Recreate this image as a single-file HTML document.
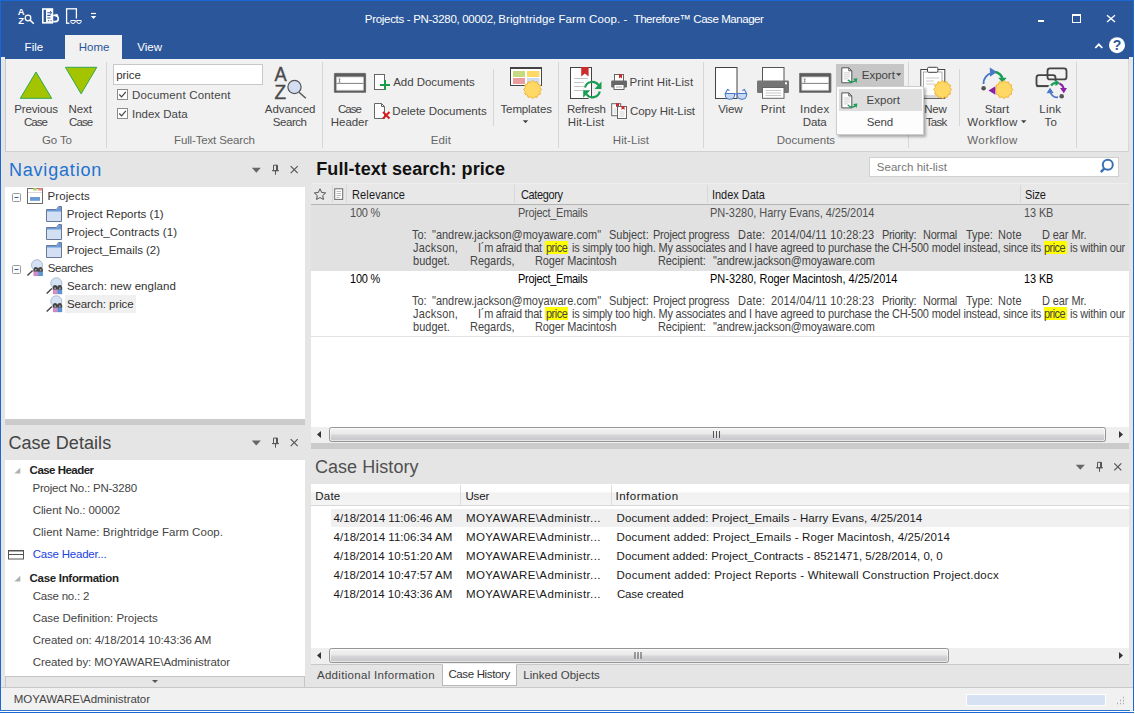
<!DOCTYPE html><html><head><meta charset="utf-8"><title>Therefore Case Manager</title><style>

html,body{margin:0;padding:0;}
body{width:1135px;height:714px;position:relative;overflow:hidden;background:#fff;font-family:"Liberation Sans", sans-serif;}
.r{position:absolute;box-sizing:border-box;}
.t{position:absolute;white-space:pre;line-height:1;}
.i{position:absolute;left:0;top:0;overflow:visible;pointer-events:none;}
.hl{background:#ffff00;}

</style></head><body>
<div class="r" style="left:0px;top:0px;width:1135px;height:714px;background:#e5e5e5;"></div>
<div class="r" style="left:0px;top:0px;width:1135px;height:59px;background:#2b579a;"></div>
<div class="r" style="left:1px;top:57px;width:4px;height:2px;background:#ececec;"></div>
<div class="r" style="left:1129px;top:57px;width:4px;height:2px;background:#e8e8e8;"></div>
<span class="t" style="left:364.82px;top:14.00px;font-size:11.5px;color:#fff;letter-spacing:-0.304px;">Projects - PN-3280, 00002,</span>
<span class="t" style="left:498.21px;top:14.00px;font-size:11.5px;color:#fff;letter-spacing:0.114px;">Brightridge Farm Coop. -</span>
<span class="t" style="left:633.57px;top:14.00px;font-size:11.5px;color:#fff;letter-spacing:-0.439px;">Therefore™ Case Manager</span>
<svg class="i" width="1135" height="714" viewBox="0 0 1135 714"><g fill="none" stroke="#fff" stroke-width="1.3">
<text x="17.8" y="15" font-size="9.5" font-weight="700" fill="#fff" stroke="none" font-family="Liberation Sans, sans-serif">A</text>
<text x="18.2" y="23.6" font-size="9.5" font-weight="700" fill="#fff" stroke="none" font-family="Liberation Sans, sans-serif">Z</text>
<circle cx="28" cy="18" r="2.8"/><path d="M30 20 L33.8 23.8" stroke-width="1.6"/>
<rect x="42" y="8.2" width="11.2" height="15.4" fill="#fff" stroke="none"/><rect x="43.6" y="9.8" width="2.4" height="12.2" fill="#2b579a" stroke="none"/>
<path d="M47.3 12.7 H51.6 M47.3 15.4 H50.5 M47.3 18 H50.5 M48 20.8 h1.2 M50.5 20.8 h1.2" stroke="#2b579a" stroke-width="1.1"/><path d="M50 11 l1.8 1.7 l-1.8 1.7" stroke="#2b579a" stroke-width="0.9"/>
<path d="M53.2 15.4 H55.2 A3.1 3.1 0 0 1 55.2 21.6 H53.2" stroke-width="1.6"/><path d="M55.6 13.4 L58.6 15 L55.8 17.4 Z" fill="#fff" stroke="none"/>
<rect x="66.6" y="8.8" width="9.8" height="14.4"/>
<rect x="69.5" y="18.5" width="13" height="5.5" fill="#2b579a" stroke="none"/>
<path d="M70.8 21.5 a2 1.8 0 0 0 4.4 0 v-1 h-4.4 z M76.8 21.5 a2 1.8 0 0 0 4.4 0 v-1 h-4.4 z M75.2 21 h1.6" stroke-width="1"/>
<path d="M91 13.5 H96" stroke-width="1.2"/><path d="M90.8 16 H96.2 L93.5 19 Z" fill="#fff" stroke="none"/>
</g></svg>
<svg class="i" width="1135" height="714" viewBox="0 0 1135 714"><g fill="none" stroke="#fff">
<rect x="1038" y="20" width="6" height="2" fill="#fff" stroke="none"/>
<rect x="1072.5" y="14.5" width="8" height="8" stroke-width="1"/><rect x="1072" y="14" width="9" height="2" fill="#fff" stroke="none"/>
<path d="M1107 15.2 L1115 22 M1115 15.2 L1107 22" stroke-width="1.4"/>
<path d="M1095.3 48 L1098.8 44.3 L1102.3 48" stroke-width="1.8"/>
<circle cx="1117" cy="45.2" r="8" fill="#fff" stroke="none"/>
<text x="1117" y="50.3" font-size="14" font-weight="700" fill="#2b579a" stroke="none" text-anchor="middle" font-family="Liberation Sans, sans-serif">?</text>
</g></svg>
<div class="r" style="left:65px;top:35px;width:57px;height:25px;background:#f1f1f1;"></div>
<span class="t" style="left:24.62px;top:42.00px;font-size:11.5px;color:#fff;letter-spacing:0.003px;">File</span>
<span class="t" style="left:78.82px;top:42.00px;font-size:11.5px;color:#2b579a;letter-spacing:-0.015px;">Home</span>
<span class="t" style="left:137.21px;top:42.00px;font-size:11.5px;color:#fff;letter-spacing:0.005px;">View</span>
<div class="r" style="left:5px;top:59px;width:1124px;height:93px;background:#f1f1f1;border-bottom:1px solid #d0d0d0;border-left:1px solid #c8c8c8;border-right:1px solid #d8d8d8;"></div>
<div class="r" style="left:106px;top:62px;width:1px;height:86px;background:#d6d6d6;"></div>
<div class="r" style="left:322px;top:62px;width:1px;height:86px;background:#d6d6d6;"></div>
<div class="r" style="left:558px;top:62px;width:1px;height:86px;background:#d6d6d6;"></div>
<div class="r" style="left:703px;top:62px;width:1px;height:86px;background:#d6d6d6;"></div>
<div class="r" style="left:1076px;top:62px;width:1px;height:86px;background:#d6d6d6;"></div>
<div class="r" style="left:908px;top:62px;width:1px;height:86px;background:#d6d6d6;"></div>
<div class="r" style="left:493px;top:69px;width:1px;height:57px;background:#d6d6d6;"></div>
<div class="r" style="left:959px;top:69px;width:1px;height:57px;background:#d6d6d6;"></div>
<span class="t" style="left:42.09px;top:135.00px;font-size:11.5px;color:#666;letter-spacing:-0.161px;">Go To</span>
<span class="t" style="left:174.04px;top:135.00px;font-size:11.5px;color:#666;letter-spacing:-0.149px;">Full-Text Search</span>
<span class="t" style="left:430.82px;top:135.00px;font-size:11.5px;color:#666;letter-spacing:0.087px;">Edit</span>
<span class="t" style="left:612.82px;top:135.00px;font-size:11.5px;color:#666;letter-spacing:0.060px;">Hit-List</span>
<span class="t" style="left:776.81px;top:135.00px;font-size:11.5px;color:#666;letter-spacing:0.020px;">Documents</span>
<span class="t" style="left:967.27px;top:135.00px;font-size:11.5px;color:#666;letter-spacing:0.418px;">Workflow</span>
<svg class="i" width="1135" height="714" viewBox="0 0 1135 714"><path d="M36 72 L51.7 98.3 H20.3 Z" fill="#a4c400" stroke="#2ea84f" stroke-width="1"/>
<path d="M65.4 67.3 H96.8 L81.1 93.8 Z" fill="#a4c400" stroke="#2ea84f" stroke-width="1"/></svg>
<span class="t" style="left:14.22px;top:104.00px;font-size:11.5px;color:#444;letter-spacing:-0.153px;">Previous</span>
<span class="t" style="left:24.09px;top:117.00px;font-size:11.5px;color:#444;letter-spacing:-1.042px;">Case</span>
<span class="t" style="left:68.40px;top:104.00px;font-size:11.5px;color:#444;letter-spacing:0.011px;">Next</span>
<span class="t" style="left:68.99px;top:117.00px;font-size:11.5px;color:#444;letter-spacing:-0.893px;">Case</span>
<div class="r" style="left:113px;top:64px;width:150px;height:21px;background:#fff;border:1px solid #c8c8c8;"></div>
<span class="t" style="left:116.28px;top:70.00px;font-size:11.5px;color:#333;letter-spacing:-0.075px;">price</span>
<div class="r" style="left:117px;top:89px;width:11px;height:11px;background:#fff;border:1px solid #8c8c8c;"></div>
<svg class="i" width="1135" height="714" viewBox="0 0 1135 714"><path d="M119.3 94.5 L121.6 96.8 L125.8 91.8" fill="none" stroke="#444" stroke-width="1.2"/></svg>
<div class="r" style="left:117px;top:108px;width:11px;height:11px;background:#fff;border:1px solid #8c8c8c;"></div>
<svg class="i" width="1135" height="714" viewBox="0 0 1135 714"><path d="M119.3 113.5 L121.6 115.8 L125.8 110.8" fill="none" stroke="#444" stroke-width="1.2"/></svg>
<span class="t" style="left:131.96px;top:90.00px;font-size:11.5px;color:#444;letter-spacing:0.176px;">Document Content</span>
<span class="t" style="left:131.95px;top:109.00px;font-size:11.5px;color:#444;letter-spacing:0.002px;">Index Data</span>
<svg class="i" width="1135" height="714" viewBox="0 0 1135 714"><g font-family="Liberation Sans, sans-serif" fill="#4a4a4a" stroke="#4a4a4a" stroke-width="0.35">
<text x="274.6" y="81.4" font-size="19.5" textLength="12.2" lengthAdjust="spacingAndGlyphs">A</text><text x="274.6" y="98.7" font-size="19.5" textLength="11.6" lengthAdjust="spacingAndGlyphs">Z</text></g>
<circle cx="294.5" cy="87" r="6.6" fill="#d3def2" stroke="#555" stroke-width="1.2"/>
<path d="M299 92.3 L305.8 98.3" stroke="#555" stroke-width="1.5"/></svg>
<span class="t" style="left:264.84px;top:104.00px;font-size:11.5px;color:#444;letter-spacing:-0.078px;">Advanced</span>
<span class="t" style="left:272.74px;top:117.00px;font-size:11.5px;color:#444;letter-spacing:-0.433px;">Search</span>
<svg class="i" width="1135" height="714" viewBox="0 0 1135 714"><rect x="334" y="73" width="32" height="19.8" rx="0.8" fill="#5c5c5c"/><rect x="334.3" y="73.3" width="31.4" height="19.2" rx="0.8" fill="none" stroke="#8a8a8a" stroke-width="0.6"/><rect x="336.5" y="76.8" width="27" height="13.6" fill="#fff"/><rect x="336.8" y="77.1" width="26.4" height="13" fill="none" stroke="#c8c8c8" stroke-width="0.6"/><path d="M336.5 83.4 H363.5" stroke="#808080" stroke-width="1"/><path d="M338.5 79 h2 m-1 0 v3 m-1 0 h2" stroke="#666" stroke-width="0.7" fill="none"/></svg>
<span class="t" style="left:337.98px;top:104.00px;font-size:11.5px;color:#444;letter-spacing:-0.993px;">Case</span>
<span class="t" style="left:330.82px;top:117.00px;font-size:11.5px;color:#444;letter-spacing:-0.055px;">Header</span>
<svg class="i" width="1135" height="714" viewBox="0 0 1135 714"><rect x="374.5" y="74.5" width="10" height="15" fill="#fff" stroke="#666" stroke-width="1"/>
<path d="M380 85 H390 M385 80 V90" stroke="#1a9d48" stroke-width="2"/>
<path d="M374.5 103.5 H381.5 L384.5 106.5 V118.5 H374.5 Z" fill="#fff" stroke="#666" stroke-width="1"/><path d="M381.5 103.5 V106.5 H384.5" fill="none" stroke="#666" stroke-width="1"/>
<path d="M383 112 L389.5 118.5 M389.5 112 L383 118.5" stroke="#d42020" stroke-width="2"/></svg>
<span class="t" style="left:393.15px;top:77.00px;font-size:11.5px;color:#444;letter-spacing:-0.024px;">Add Documents</span>
<span class="t" style="left:392.35px;top:106.00px;font-size:11.5px;color:#444;letter-spacing:-0.019px;">Delete Documents</span>
<svg class="i" width="1135" height="714" viewBox="0 0 1135 714"><rect x="510.5" y="67.5" width="31" height="18" fill="#fff" stroke="#444" stroke-width="1"/><rect x="510" y="67" width="32" height="2" fill="#444"/>
<rect x="513" y="71" width="12" height="6" fill="#c6da80"/><rect x="527" y="71" width="12.5" height="6" fill="#ffd966"/>
<rect x="513" y="78" width="12" height="6" fill="#ec9c9c"/><rect x="527" y="78" width="12.5" height="6" fill="#cfdcf0"/><polygon points="541.6,89.6 539.9,91.6 540.4,94.1 537.9,94.9 537.1,97.4 534.6,96.9 532.6,98.6 530.6,96.9 528.1,97.4 527.3,94.9 524.8,94.1 525.3,91.6 523.6,89.6 525.3,87.6 524.8,85.1 527.3,84.3 528.1,81.8 530.6,82.3 532.6,80.6 534.6,82.3 537.1,81.8 537.9,84.3 540.4,85.1 539.9,87.6" fill="#ffd866" stroke="#f2b43a" stroke-width="1"/></svg>
<span class="t" style="left:500.49px;top:104.00px;font-size:11.5px;color:#444;letter-spacing:-0.125px;">Templates</span>
<svg class="i" width="1135" height="714" viewBox="0 0 1135 714"><path d="M522.8 120.3 H528.2 L525.5 123.2 Z" fill="#444"/></svg>
<svg class="i" width="1135" height="714" viewBox="0 0 1135 714"><rect x="570.5" y="67.5" width="21" height="31" fill="#fff" stroke="#444" stroke-width="1"/>
<path d="M581.2 67 H588.6 V76.5 L584.9 73.5 L581.2 76.5 Z" fill="#cc2b2b"/>
<path d="M574 78.5 H588 M574 82.5 H588 M574 86.5 H584 M574 90.5 H583" stroke="#c4c4c4" stroke-width="1"/>
<circle cx="592.4" cy="89.6" r="9.6" fill="#f1f1f1" stroke="none"/>
<rect x="584" y="80" width="7" height="18" fill="#fff"/><path d="M591.5 80 V98.3" stroke="#444" stroke-width="1"/>
<path d="M585 87.5 A7.6 7.6 0 0 1 598.5 85" fill="none" stroke="#1a9d55" stroke-width="2.2"/><path d="M601.5 81.5 V89 H594.5 Z" fill="#1a9d55"/>
<path d="M599.8 91.5 A7.6 7.6 0 0 1 586.3 94.2" fill="none" stroke="#1a9d55" stroke-width="2.2"/><path d="M583.2 97.8 V90.2 H590.3 Z" fill="#1a9d55"/></svg>
<span class="t" style="left:566.99px;top:104.00px;font-size:11.5px;color:#444;letter-spacing:-0.214px;">Refresh</span>
<span class="t" style="left:567.83px;top:117.00px;font-size:11.5px;color:#444;letter-spacing:0.093px;">Hit-List</span>
<svg class="i" width="1135" height="714" viewBox="0 0 1135 714"><rect x="614.5" y="74.5" width="9" height="7" fill="#fff" stroke="#666" stroke-width="1"/><path d="M619 74 h3 v4.5 l-1.5 -1.2 l-1.5 1.2 z" fill="#cc2b2b"/>
<rect x="611.2" y="80.5" width="15.8" height="7" rx="1" fill="#666"/>
<rect x="614" y="84.5" width="10" height="5" fill="#fff" stroke="#666" stroke-width="1"/><path d="M616 87 h6" stroke="#999" stroke-width="0.8"/></svg>
<svg class="i" width="1135" height="714" viewBox="0 0 1135 714"><rect x="611.7" y="103.7" width="9" height="12" fill="#fff" stroke="#666" stroke-width="1"/><path d="M616 103.2 h3 v4 l-1.5 -1.2 l-1.5 1.2 z" fill="#cc2b2b"/>
<rect x="617.5" y="106.5" width="9" height="12" fill="#fff" stroke="#666" stroke-width="1"/><path d="M621.5 106 h3 v4 l-1.5 -1.2 l-1.5 1.2 z" fill="#cc2b2b"/>
<path d="M613.5 109 h3 M613.5 111 h3 M613.5 113 h3 M619.5 112 h5 M619.5 114 h5 M619.5 116 h5" stroke="#bbb" stroke-width="0.7"/></svg>
<span class="t" style="left:629.62px;top:77.00px;font-size:11.5px;color:#444;letter-spacing:0.065px;">Print Hit-List</span>
<span class="t" style="left:629.99px;top:106.00px;font-size:11.5px;color:#444;letter-spacing:-0.066px;">Copy Hit-List</span>
<svg class="i" width="1135" height="714" viewBox="0 0 1135 714"><rect x="715.5" y="67.5" width="21.5" height="31" fill="#fff" stroke="#444" stroke-width="1"/>
<rect x="724.5" y="88" width="23" height="11" fill="none"/>
<path d="M725.3 93.5 H734.6 V95 A4.65 4.3 0 0 1 725.3 95 Z M737.3 93.5 H746.6 V95 A4.65 4.3 0 0 1 737.3 95 Z" fill="#c9d8f1" stroke="#4a78c8" stroke-width="1.1"/>
<path d="M734.6 94 H737.3 M725.3 93.5 L727.5 89.5 L729.5 90.5 M746.6 93.5 L744.4 89.5 L742.4 90.5" fill="none" stroke="#4a78c8" stroke-width="1.1"/></svg>
<span class="t" style="left:718.17px;top:104.00px;font-size:11.5px;color:#444;letter-spacing:-0.076px;">View</span>
<svg class="i" width="1135" height="714" viewBox="0 0 1135 714"><rect x="762.5" y="67.5" width="21.5" height="14" fill="#fff" stroke="#555" stroke-width="1"/>
<rect x="757" y="80.5" width="32" height="12.5" rx="1.2" fill="#757575"/><rect x="785" y="82.3" width="2" height="2" fill="#fff"/>
<rect x="762.5" y="87.5" width="21.5" height="10.8" fill="#fff" stroke="#666" stroke-width="1"/>
<path d="M765.5 90.5 H781 M765.5 93 H781 M765.5 95.5 H781" stroke="#c8c8c8" stroke-width="1"/></svg>
<span class="t" style="left:760.82px;top:104.00px;font-size:11.5px;color:#444;letter-spacing:0.185px;">Print</span>
<svg class="i" width="1135" height="714" viewBox="0 0 1135 714"><rect x="799.2" y="73" width="32" height="19.8" rx="0.8" fill="#5c5c5c"/><rect x="799.5" y="73.3" width="31.4" height="19.2" rx="0.8" fill="none" stroke="#8a8a8a" stroke-width="0.6"/><rect x="801.7" y="76.8" width="27" height="13.6" fill="#fff"/><rect x="802.0" y="77.1" width="26.4" height="13" fill="none" stroke="#c8c8c8" stroke-width="0.6"/><path d="M801.7 83.4 H828.7" stroke="#808080" stroke-width="1"/><path d="M803.7 79 h2 m-1 0 v3 m-1 0 h2" stroke="#666" stroke-width="0.7" fill="none"/></svg>
<span class="t" style="left:799.90px;top:104.00px;font-size:11.5px;color:#444;letter-spacing:0.312px;">Index</span>
<span class="t" style="left:802.83px;top:117.00px;font-size:11.5px;color:#444;letter-spacing:-0.174px;">Data</span>
<svg class="i" width="1135" height="714" viewBox="0 0 1135 714"><rect x="920.8" y="69.5" width="24" height="28.8" fill="#fff" stroke="#444" stroke-width="1"/><rect x="923.5" y="72" width="18.5" height="24" fill="#fff" stroke="#999" stroke-width="0.8"/>
<rect x="927.5" y="67.3" width="10.4" height="5" rx="1.2" fill="#fff" stroke="#444" stroke-width="1"/>
<path d="M926 78 H939 M926 81 H934 M926 84 H935" stroke="#ccc" stroke-width="1.2"/><polygon points="951.6,89.6 949.9,91.6 950.4,94.1 947.9,94.9 947.1,97.4 944.6,96.9 942.6,98.6 940.6,96.9 938.1,97.4 937.3,94.9 934.8,94.1 935.3,91.6 933.6,89.6 935.3,87.6 934.8,85.1 937.3,84.3 938.1,81.8 940.6,82.3 942.6,80.6 944.6,82.3 947.1,81.8 947.9,84.3 950.4,85.1 949.9,87.6" fill="#ffd866" stroke="#f2b43a" stroke-width="1"/></svg>
<span class="t" style="left:924.19px;top:104.00px;font-size:11.5px;color:#444;letter-spacing:-0.165px;">New</span>
<span class="t" style="left:925.67px;top:117.00px;font-size:11.5px;color:#444;letter-spacing:-0.657px;">Task</span>
<svg class="i" width="1135" height="714" viewBox="0 0 1135 714"><path d="M983.5 84 A 10.5 10.5 0 0 1 991.5 73.2" fill="none" stroke="#4a78c8" stroke-width="1.8"/><path d="M989.8 67.5 L997 72 L990 76.8 Z" fill="#4a78c8"/>
<path d="M995.5 72 A 10 10 0 0 1 1002.3 78" fill="none" stroke="#1a9d55" stroke-width="2.6"/><path d="M998.2 77.8 H1006.5 L1002.8 83 Z" fill="#1a9d55"/>
<circle cx="983.6" cy="88.2" r="2.3" fill="#555"/><polygon points="1012.9,89.6 1011.2,91.6 1011.7,94.1 1009.2,94.9 1008.4,97.4 1005.9,96.9 1003.9,98.6 1001.9,96.9 999.4,97.4 998.6,94.9 996.1,94.1 996.6,91.6 994.9,89.6 996.6,87.6 996.1,85.1 998.6,84.3 999.4,81.8 1001.9,82.3 1003.9,80.6 1005.9,82.3 1008.4,81.8 1009.2,84.3 1011.7,85.1 1011.2,87.6" fill="#ffd866" stroke="#f2b43a" stroke-width="1"/><path d="M988.5 90.5 L995.3 86.3 V94.7 Z" fill="#8a1fa8"/></svg>
<span class="t" style="left:984.82px;top:104.00px;font-size:11.5px;color:#444;letter-spacing:0.017px;">Start</span>
<span class="t" style="left:967.27px;top:117.00px;font-size:11.5px;color:#444;letter-spacing:0.418px;">Workflow</span>
<svg class="i" width="1135" height="714" viewBox="0 0 1135 714"><path d="M1021 120.3 H1026.4 L1023.7 123.2 Z" fill="#444"/></svg>
<svg class="i" width="1135" height="714" viewBox="0 0 1135 714"><rect x="1036.5" y="75.2" width="19" height="11" rx="2.5" fill="none" stroke="#444" stroke-width="1.8"/>
<rect x="1047.5" y="68.4" width="19" height="11" rx="2.5" fill="none" stroke="#444" stroke-width="1.8"/>
<circle cx="1056.8" cy="90" r="9" fill="#f1f1f1"/>
<path d="M1036.5 86.2 H1048" stroke="#444" stroke-width="1.8"/>
<path d="M1051 85.5 A7 7 0 0 1 1056.5 82.8" fill="none" stroke="#1a9d55" stroke-width="2.2"/><path d="M1055.5 79.8 L1060 83 L1055.5 86 Z" fill="#1a9d55"/>
<path d="M1059.5 83.6 A7 7 0 0 1 1063.6 88" fill="none" stroke="#8a1fa8" stroke-width="2.2"/><path d="M1060 88 H1067 L1063.8 93.2 Z" fill="#8a1fa8"/>
<path d="M1058 97.2 A7 7 0 0 1 1050.5 92.5" fill="none" stroke="#4a78c8" stroke-width="1.8"/><path d="M1046.5 93.2 L1050 87.8 L1053.6 93 Z" fill="#4a78c8"/>
<circle cx="1061.7" cy="96.2" r="2.3" fill="#555"/></svg>
<span class="t" style="left:1039.30px;top:104.00px;font-size:11.5px;color:#444;letter-spacing:0.242px;">Link</span>
<span class="t" style="left:1044.49px;top:117.00px;font-size:11.5px;color:#444;letter-spacing:0.255px;">To</span>
<div class="r" style="left:836px;top:64px;width:68px;height:23px;background:#c6c6c6;"></div>
<svg class="i" width="1135" height="714" viewBox="0 0 1135 714"><path d="M841.8 67.8 H848.8 L851.8 70.8 V82.8 H841.8 Z" fill="#fff" stroke="#555" stroke-width="1"/><path d="M848.8 67.8 V70.8 H851.8" fill="none" stroke="#555" stroke-width="1"/><path d="M843.8 72.8 h6 M843.8 74.8 h6 M843.8 76.8 h6 M843.8 78.8 h4" stroke="#c4c4c4" stroke-width="0.8"/><path d="M847.8 79.8 Q851.3 83.8 855.3 80.8" fill="none" stroke="#1a9d55" stroke-width="1.4"/><path d="M853.0999999999999 78.8 L857.3 78.3 L856.5999999999999 82.89999999999999 Z" fill="#1a9d55"/></svg>
<span class="t" style="left:861.83px;top:70.00px;font-size:11.5px;color:#444;letter-spacing:-0.048px;">Export</span>
<svg class="i" width="1135" height="714" viewBox="0 0 1135 714"><path d="M896 73.2 H901.4 L898.7 76 Z" fill="#444"/></svg>
<div class="r" style="left:836px;top:86px;width:88px;height:49px;background:#fdfdfd;border:1px solid #cdcdcd;box-shadow:1.5px 1.5px 2.5px rgba(0,0,0,.3);"></div>
<div class="r" style="left:839px;top:89px;width:83px;height:22px;background:#dedede;"></div>
<svg class="i" width="1135" height="714" viewBox="0 0 1135 714"><path d="M841.8 92.9 H848.8 L851.8 95.9 V107.9 H841.8 Z" fill="#fff" stroke="#555" stroke-width="1"/><path d="M848.8 92.9 V95.9 H851.8" fill="none" stroke="#555" stroke-width="1"/><path d="M843.8 97.9 h6 M843.8 99.9 h6 M843.8 101.9 h6 M843.8 103.9 h4" stroke="#c4c4c4" stroke-width="0.8"/><path d="M847.8 104.9 Q851.3 108.9 855.3 105.9" fill="none" stroke="#1a9d55" stroke-width="1.4"/><path d="M853.0999999999999 103.9 L857.3 103.4 L856.5999999999999 108.0 Z" fill="#1a9d55"/></svg>
<span class="t" style="left:866.43px;top:95.00px;font-size:11.5px;color:#444;letter-spacing:0.052px;">Export</span>
<span class="t" style="left:866.74px;top:117.00px;font-size:11.5px;color:#444;letter-spacing:-0.160px;">Send</span>
<span class="t" style="left:8.88px;top:161.00px;font-size:18px;color:#1e72d2;letter-spacing:0.820px;">Navigation</span>
<svg class="i" width="1135" height="714" viewBox="0 0 1135 714"><path d="M251.8 167.7 H260.8 L256.3 172.7 Z" fill="#666"/><path d="M273.5 165.2 H277.5 V170.7 H273.5 Z M272.0 170.7 H279.0 M275.5 170.7 V174.7" fill="none" stroke="#555" stroke-width="1"/><path d="M276.7 165.2 V170.7" stroke="#555" stroke-width="1.4"/><path d="M290.7 166.2 L297.7 173.2 M297.7 166.2 L290.7 173.2" stroke="#555" stroke-width="1.2"/></svg>
<div class="r" style="left:5px;top:187px;width:300px;height:232px;background:#fff;"></div>
<div class="r" style="left:5px;top:419px;width:300px;height:6px;background:#cbcbcb;"></div>
<svg class="i" width="1135" height="714" viewBox="0 0 1135 714"><rect x="12.5" y="193.5" width="8" height="8" rx="1" fill="#fafafa" stroke="#9a9a9a" stroke-width="1"/><path d="M14.5 197.5 H18.5" stroke="#3a5fa8" stroke-width="1"/><rect x="12.5" y="265.5" width="8" height="8" rx="1" fill="#fafafa" stroke="#9a9a9a" stroke-width="1"/><path d="M14.5 269.5 H18.5" stroke="#3a5fa8" stroke-width="1"/><rect x="27.5" y="188.5" width="15" height="15" fill="#fff" stroke="#6a6a6a" stroke-width="1"/><path d="M28 192.5 H42" stroke="#d8d8d8" stroke-width="1"/><rect x="33.2" y="188.2" width="4" height="2.4" fill="#bcd36a"/><rect x="38.3" y="188.2" width="4.2" height="2.4" fill="#ee8a8a"/><rect x="30" y="197" width="10" height="3.8" fill="#6a9ad8"/><path d="M46.5 209.5 H56.5 L58.5 206.5 H61.5 V221.5 H46.5 Z" fill="#d3e0f3" stroke="#68789a" stroke-width="1"/><path d="M47 210 H56.8 L58.8 207 H61 V211.6 H47 Z" fill="#6a9ad8" stroke="none"/><path d="M46.5 227.5 H56.5 L58.5 224.5 H61.5 V239.5 H46.5 Z" fill="#d3e0f3" stroke="#68789a" stroke-width="1"/><path d="M47 228 H56.8 L58.8 225 H61 V229.6 H47 Z" fill="#6a9ad8" stroke="none"/><path d="M46.5 245.5 H56.5 L58.5 242.5 H61.5 V257.5 H46.5 Z" fill="#d3e0f3" stroke="#68789a" stroke-width="1"/><path d="M47 246 H56.8 L58.8 243 H61 V247.6 H47 Z" fill="#6a9ad8" stroke="none"/><circle cx="37" cy="265.2" r="5.5" fill="#d5e2f3" stroke="#a3b3c8" stroke-width="0.9"/><path d="M32.6 270.5 L27.4 275.5" stroke="#444" stroke-width="1.4"/><rect x="33.9" y="271.2" width="4" height="4.6" fill="#d88cc8" stroke="#b070a8" stroke-width="0.5"/><rect x="38.6" y="271.2" width="4" height="4.6" fill="#5a95d8" stroke="#4078b8" stroke-width="0.5"/><path d="M33.4 271.4 v-2 q0.4 -2.4 2.4 -2.4 q2 0 2.3 1.6 q0.3 -1.6 2.4 -1.6 q2 0 2.4 2.4 v2 z" fill="#444"/><path d="M34.8 269.59999999999997 h2 l-1 1.2 z M39.6 269.59999999999997 h2 l-1 1.2 z" fill="#fff"/><circle cx="56.3" cy="283.3" r="5.5" fill="#d5e2f3" stroke="#a3b3c8" stroke-width="0.9"/><path d="M51.9 288.6 L46.699999999999996 293.6" stroke="#444" stroke-width="1.4"/><rect x="53.199999999999996" y="289.3" width="4" height="4.6" fill="#d88cc8" stroke="#b070a8" stroke-width="0.5"/><rect x="57.9" y="289.3" width="4" height="4.6" fill="#5a95d8" stroke="#4078b8" stroke-width="0.5"/><path d="M52.699999999999996 289.5 v-2 q0.4 -2.4 2.4 -2.4 q2 0 2.3 1.6 q0.3 -1.6 2.4 -1.6 q2 0 2.4 2.4 v2 z" fill="#444"/><path d="M54.099999999999994 287.7 h2 l-1 1.2 z M58.9 287.7 h2 l-1 1.2 z" fill="#fff"/><circle cx="56.3" cy="301.3" r="5.5" fill="#d5e2f3" stroke="#a3b3c8" stroke-width="0.9"/><path d="M51.9 306.6 L46.699999999999996 311.6" stroke="#444" stroke-width="1.4"/><rect x="53.199999999999996" y="307.3" width="4" height="4.6" fill="#d88cc8" stroke="#b070a8" stroke-width="0.5"/><rect x="57.9" y="307.3" width="4" height="4.6" fill="#5a95d8" stroke="#4078b8" stroke-width="0.5"/><path d="M52.699999999999996 307.5 v-2 q0.4 -2.4 2.4 -2.4 q2 0 2.3 1.6 q0.3 -1.6 2.4 -1.6 q2 0 2.4 2.4 v2 z" fill="#444"/><path d="M54.099999999999994 305.7 h2 l-1 1.2 z M58.9 305.7 h2 l-1 1.2 z" fill="#fff"/></svg>
<span class="t" style="left:47.62px;top:191.00px;font-size:11.5px;color:#333;letter-spacing:0.077px;">Projects</span>
<span class="t" style="left:66.83px;top:209.00px;font-size:11.5px;color:#333;letter-spacing:0.019px;">Project Reports (1)</span>
<span class="t" style="left:66.83px;top:227.00px;font-size:11.5px;color:#333;letter-spacing:0.077px;">Project_Contracts (1)</span>
<span class="t" style="left:66.83px;top:245.00px;font-size:11.5px;color:#333;letter-spacing:-0.046px;">Project_Emails (2)</span>
<span class="t" style="left:47.70px;top:263.00px;font-size:11.5px;color:#333;letter-spacing:-0.423px;">Searches</span>
<span class="t" style="left:66.88px;top:281.00px;font-size:11.5px;color:#333;letter-spacing:0.055px;">Search: new england</span>
<div class="r" style="left:65px;top:295px;width:71px;height:18px;background:#f0f0f0;"></div>
<span class="t" style="left:66.88px;top:299.00px;font-size:11.5px;color:#333;letter-spacing:-0.079px;">Search: price</span>
<span class="t" style="left:8.43px;top:434.00px;font-size:18px;color:#444;letter-spacing:0.063px;">Case Details</span>
<svg class="i" width="1135" height="714" viewBox="0 0 1135 714"><path d="M251.8 440.6 H260.8 L256.3 445.6 Z" fill="#666"/><path d="M273.5 438.1 H277.5 V443.6 H273.5 Z M272.0 443.6 H279.0 M275.5 443.6 V447.6" fill="none" stroke="#555" stroke-width="1"/><path d="M276.7 438.1 V443.6" stroke="#555" stroke-width="1.4"/><path d="M290.7 439.1 L297.7 446.1 M297.7 439.1 L290.7 446.1" stroke="#555" stroke-width="1.2"/></svg>
<div class="r" style="left:5px;top:460px;width:300px;height:216px;background:#fff;"></div>
<div class="r" style="left:5px;top:676px;width:300px;height:12px;background:#e6e6e6;border:1px solid #c6c6c6;"></div>
<svg class="i" width="1135" height="714" viewBox="0 0 1135 714"><path d="M152 680 H158 L155 683 Z" fill="#555"/><path d="M20.3 467.8 V473.4 H14.3 Z" fill="#b0b0b0"/><path d="M20.3 575.8 V581.4 H14.3 Z" fill="#b0b0b0"/><rect x="8.5" y="550.5" width="15" height="8.5" fill="#fff" stroke="#555" stroke-width="1"/><path d="M8 551 H24 M8.5 554.5 H23.5" stroke="#555" stroke-width="1"/></svg>
<span class="t" style="left:29.62px;top:465.00px;font-size:11.5px;color:#222;font-weight:700;letter-spacing:-0.528px;">Case Header</span>
<span class="t" style="left:32.44px;top:483.00px;font-size:11.5px;color:#444;letter-spacing:-0.213px;">Project No.: PN-3280</span>
<span class="t" style="left:32.70px;top:505.00px;font-size:11.5px;color:#444;letter-spacing:-0.087px;">Client No.: 00002</span>
<span class="t" style="left:32.70px;top:527.00px;font-size:11.5px;color:#444;letter-spacing:0.031px;">Client Name: Brightridge Farm Coop.</span>
<span class="t" style="left:32.70px;top:549.00px;font-size:11.5px;color:#1a44e0;letter-spacing:-0.211px;">Case Header...</span>
<span class="t" style="left:29.62px;top:573.00px;font-size:11.5px;color:#222;font-weight:700;letter-spacing:-0.306px;">Case Information</span>
<span class="t" style="left:32.70px;top:591.00px;font-size:11.5px;color:#444;letter-spacing:-0.210px;">Case no.: 2</span>
<span class="t" style="left:32.70px;top:613.00px;font-size:11.5px;color:#444;letter-spacing:-0.039px;">Case Definition: Projects</span>
<span class="t" style="left:32.70px;top:635.00px;font-size:11.5px;color:#444;letter-spacing:-0.108px;">Created on: 4/18/2014 10:43:36 AM</span>
<span class="t" style="left:32.70px;top:657.00px;font-size:11.5px;color:#444;letter-spacing:-0.085px;">Created by: MOYAWARE\Administrator</span>
<div class="r" style="left:1px;top:687px;width:1132px;height:23px;background:#f1f1f1;border-top:1px solid #c8c8c8;"></div>
<span class="t" style="left:13.83px;top:694.00px;font-size:11.5px;color:#444;letter-spacing:-0.067px;">MOYAWARE\Administrator</span>
<div class="r" style="left:966px;top:694px;width:140px;height:12px;background:#d6e2f3;border:1px solid #fff;"></div>
<svg class="i" width="1135" height="714" viewBox="0 0 1135 714"><path d="M1123 697.5 h1 M1120 700.5 h1 M1123 700.5 h1 M1117 703.5 h1 M1120 703.5 h1 M1123 703.5 h1" stroke="#aaa" stroke-width="1.4"/></svg>
<div class="r" style="left:0px;top:0px;width:1135px;height:1px;background:#1a68d6;"></div>
<div class="r" style="left:0px;top:0px;width:1px;height:712px;background:#1a68d6;"></div>
<div class="r" style="left:1133px;top:0px;width:1px;height:713px;background:#1a68d6;"></div>
<div class="r" style="left:1134px;top:0px;width:1px;height:714px;background:#fff;"></div>
<div class="r" style="left:0px;top:710px;width:1130px;height:1px;background:#2f74d0;"></div>
<div class="r" style="left:0px;top:711px;width:1135px;height:1px;background:#fff;"></div>
<div class="r" style="left:0px;top:712px;width:1134px;height:1px;background:#1a68d6;"></div>
<div class="r" style="left:0px;top:713px;width:1135px;height:1px;background:#fff;"></div>
<span class="t" style="left:316.26px;top:160.00px;font-size:18px;color:#111;font-weight:700;letter-spacing:0.073px;">Full-text search: price</span>
<div class="r" style="left:869px;top:157px;width:250px;height:20px;background:#fff;border:1px solid #d0d0d0;"></div>
<span class="t" style="left:876.82px;top:162.00px;font-size:11.5px;color:#777;letter-spacing:0.030px;">Search hit-list</span>
<svg class="i" width="1135" height="714" viewBox="0 0 1135 714"><circle cx="1107.8" cy="164.8" r="5" fill="none" stroke="#3a70b5" stroke-width="2"/><path d="M1104.4 168.4 L1100.8 172.2" stroke="#3a70b5" stroke-width="2.4"/></svg>
<div class="r" style="left:311px;top:183px;width:818px;height:1px;background:#efefef;"></div>
<div class="r" style="left:311px;top:184px;width:818px;height:243px;background:#fff;"></div>
<div class="r" style="left:311px;top:184px;width:818px;height:21px;background:#e8e8e8;border-bottom:1px solid #b4b4b4;"></div>
<div class="r" style="left:332px;top:185px;width:1px;height:18px;background:#d8d8d8;"></div>
<div class="r" style="left:346px;top:185px;width:1px;height:18px;background:#d8d8d8;"></div>
<div class="r" style="left:514px;top:185px;width:1px;height:18px;background:#d8d8d8;"></div>
<div class="r" style="left:707px;top:185px;width:1px;height:18px;background:#d8d8d8;"></div>
<div class="r" style="left:1020px;top:185px;width:1px;height:18px;background:#d8d8d8;"></div>
<svg class="i" width="1135" height="714" viewBox="0 0 1135 714"><path d="M320 188.8 L321.7 192.5 L325.7 192.9 L322.7 195.6 L323.5 199.5 L320 197.5 L316.5 199.5 L317.3 195.6 L314.3 192.9 L318.3 192.5 Z" fill="none" stroke="#555" stroke-width="1"/><rect x="334.7" y="188.8" width="8" height="10.6" fill="#fff" stroke="#6a6a6a" stroke-width="1"/><path d="M336.5 191.5 h4.5 M336.5 193.5 h4.5 M336.5 195.5 h4.5 M336.5 197.5 h3" stroke="#aaa" stroke-width="0.8"/></svg>
<span class="t" style="left:351.96px;top:189.00px;font-size:12.4px;color:#1a1a1a;letter-spacing:0.163px;transform:scaleX(0.885);transform-origin:0 0;">Relevance</span>
<span class="t" style="left:520.58px;top:189.00px;font-size:12.4px;color:#1a1a1a;letter-spacing:-0.401px;transform:scaleX(0.885);transform-origin:0 0;">Category</span>
<span class="t" style="left:711.60px;top:189.00px;font-size:12.4px;color:#1a1a1a;letter-spacing:-0.024px;transform:scaleX(0.885);transform-origin:0 0;">Index Data</span>
<span class="t" style="left:1025.40px;top:189.00px;font-size:12.4px;color:#1a1a1a;letter-spacing:-0.135px;transform:scaleX(0.885);transform-origin:0 0;">Size</span>
<div class="r" style="left:311px;top:205px;width:818px;height:66px;background:#e1e1e1;"></div>
<div class="r" style="left:311px;top:336px;width:818px;height:1px;background:#e2e2e2;"></div>
<span class="t" style="left:350.33px;top:207.00px;font-size:12.4px;color:#505050;letter-spacing:-0.235px;transform:scaleX(0.885);transform-origin:0 0;">100 %</span>
<span class="t" style="left:517.96px;top:207.00px;font-size:12.4px;color:#505050;letter-spacing:-0.299px;transform:scaleX(0.885);transform-origin:0 0;">Project_Emails</span>
<span class="t" style="left:709.66px;top:207.00px;font-size:12.4px;color:#505050;letter-spacing:-0.004px;transform:scaleX(0.885);transform-origin:0 0;">PN-3280, Harry Evans, 4/25/2014</span>
<span class="t" style="left:1023.83px;top:207.00px;font-size:12.4px;color:#505050;letter-spacing:-0.137px;transform:scaleX(0.885);transform-origin:0 0;">13 KB</span>
<span class="t" style="left:411.71px;top:229.00px;font-size:12.4px;color:#444;letter-spacing:-0.015px;transform:scaleX(0.885);transform-origin:0 0;">To:</span>
<span class="t" style="left:432.49px;top:229.00px;font-size:12.4px;color:#444;letter-spacing:0.007px;transform:scaleX(0.885);transform-origin:0 0;">"andrew.jackson@moyaware.com"</span>
<span class="t" style="left:608.80px;top:229.00px;font-size:12.4px;color:#444;letter-spacing:0.010px;transform:scaleX(0.885);transform-origin:0 0;">Subject:</span>
<span class="t" style="left:653.36px;top:229.00px;font-size:12.4px;color:#444;letter-spacing:-0.247px;transform:scaleX(0.885);transform-origin:0 0;">Project progress</span>
<span class="t" style="left:738.36px;top:229.00px;font-size:12.4px;color:#444;letter-spacing:0.242px;transform:scaleX(0.885);transform-origin:0 0;">Date:</span>
<span class="t" style="left:771.49px;top:229.00px;font-size:12.4px;color:#444;letter-spacing:0.214px;transform:scaleX(0.885);transform-origin:0 0;">2014/04/11 10:28:23</span>
<span class="t" style="left:882.26px;top:229.00px;font-size:12.4px;color:#444;letter-spacing:-0.374px;transform:scaleX(0.885);transform-origin:0 0;">Priority:</span>
<span class="t" style="left:922.66px;top:229.00px;font-size:12.4px;color:#444;letter-spacing:-0.256px;transform:scaleX(0.885);transform-origin:0 0;">Normal</span>
<span class="t" style="left:965.71px;top:229.00px;font-size:12.4px;color:#444;letter-spacing:0.003px;transform:scaleX(0.885);transform-origin:0 0;">Type:</span>
<span class="t" style="left:997.76px;top:229.00px;font-size:12.4px;color:#444;letter-spacing:0.185px;transform:scaleX(0.885);transform-origin:0 0;">Note</span>
<span class="t" style="left:1041.56px;top:229.00px;font-size:12.4px;color:#444;letter-spacing:-0.086px;transform:scaleX(0.885);transform-origin:0 0;">D ear Mr.</span>
<div class="r" style="left:545px;top:241.20000000000002px;width:23px;height:13px;background:#ffff00;"></div>
<div class="r" style="left:1044px;top:241.20000000000002px;width:23px;height:13px;background:#ffff00;"></div>
<span class="t" style="left:413.04px;top:242.00px;font-size:12.4px;color:#444;letter-spacing:0.260px;transform:scaleX(0.885);transform-origin:0 0;">Jackson,</span>
<span class="t" style="left:477.65px;top:242.00px;font-size:12.4px;color:#444;letter-spacing:-0.291px;transform:scaleX(0.885);transform-origin:0 0;">I´m afraid that</span>
<span class="t" style="left:545.80px;top:242.00px;font-size:12.4px;color:#444;letter-spacing:-0.564px;transform:scaleX(0.885);transform-origin:0 0;">price</span>
<span class="t" style="left:571.70px;top:242.00px;font-size:12.4px;color:#444;letter-spacing:-0.211px;transform:scaleX(0.885);transform-origin:0 0;">is simply too high. My associates and I have agreed to purchase the CH-500 model instead, since its</span>
<span class="t" style="left:1044.42px;top:242.00px;font-size:12.4px;color:#444;letter-spacing:-0.594px;transform:scaleX(0.885);transform-origin:0 0;">price</span>
<span class="t" style="left:1069.96px;top:242.00px;font-size:12.4px;color:#444;letter-spacing:-0.255px;transform:scaleX(0.885);transform-origin:0 0;">is within our</span>
<span class="t" style="left:413.15px;top:255.00px;font-size:12.4px;color:#444;letter-spacing:0.046px;transform:scaleX(0.885);transform-origin:0 0;">budget.</span>
<span class="t" style="left:470.36px;top:255.00px;font-size:12.4px;color:#444;transform:scaleX(0.885);transform-origin:0 0;">Regards,</span>
<span class="t" style="left:535.16px;top:255.00px;font-size:12.4px;color:#444;letter-spacing:-0.112px;transform:scaleX(0.885);transform-origin:0 0;">Roger Macintosh</span>
<span class="t" style="left:658.06px;top:255.00px;font-size:12.4px;color:#444;letter-spacing:-0.133px;transform:scaleX(0.885);transform-origin:0 0;">Recipient:</span>
<span class="t" style="left:713.29px;top:255.00px;font-size:12.4px;color:#444;letter-spacing:-0.133px;transform:scaleX(0.885);transform-origin:0 0;">"andrew.jackson@moyaware.com</span>
<span class="t" style="left:350.33px;top:273.00px;font-size:12.4px;color:#000;letter-spacing:-0.235px;transform:scaleX(0.885);transform-origin:0 0;">100 %</span>
<span class="t" style="left:517.96px;top:273.00px;font-size:12.4px;color:#000;letter-spacing:-0.299px;transform:scaleX(0.885);transform-origin:0 0;">Project_Emails</span>
<span class="t" style="left:709.66px;top:273.00px;font-size:12.4px;color:#000;letter-spacing:0.010px;transform:scaleX(0.885);transform-origin:0 0;">PN-3280, Roger Macintosh, 4/25/2014</span>
<span class="t" style="left:1023.83px;top:273.00px;font-size:12.4px;color:#000;letter-spacing:-0.137px;transform:scaleX(0.885);transform-origin:0 0;">13 KB</span>
<span class="t" style="left:411.71px;top:295.00px;font-size:12.4px;color:#444;letter-spacing:-0.015px;transform:scaleX(0.885);transform-origin:0 0;">To:</span>
<span class="t" style="left:432.49px;top:295.00px;font-size:12.4px;color:#444;letter-spacing:0.007px;transform:scaleX(0.885);transform-origin:0 0;">"andrew.jackson@moyaware.com"</span>
<span class="t" style="left:608.80px;top:295.00px;font-size:12.4px;color:#444;letter-spacing:0.010px;transform:scaleX(0.885);transform-origin:0 0;">Subject:</span>
<span class="t" style="left:653.36px;top:295.00px;font-size:12.4px;color:#444;letter-spacing:-0.247px;transform:scaleX(0.885);transform-origin:0 0;">Project progress</span>
<span class="t" style="left:738.36px;top:295.00px;font-size:12.4px;color:#444;letter-spacing:0.242px;transform:scaleX(0.885);transform-origin:0 0;">Date:</span>
<span class="t" style="left:771.49px;top:295.00px;font-size:12.4px;color:#444;letter-spacing:0.214px;transform:scaleX(0.885);transform-origin:0 0;">2014/04/11 10:28:23</span>
<span class="t" style="left:882.26px;top:295.00px;font-size:12.4px;color:#444;letter-spacing:-0.374px;transform:scaleX(0.885);transform-origin:0 0;">Priority:</span>
<span class="t" style="left:922.66px;top:295.00px;font-size:12.4px;color:#444;letter-spacing:-0.256px;transform:scaleX(0.885);transform-origin:0 0;">Normal</span>
<span class="t" style="left:965.71px;top:295.00px;font-size:12.4px;color:#444;letter-spacing:0.003px;transform:scaleX(0.885);transform-origin:0 0;">Type:</span>
<span class="t" style="left:997.76px;top:295.00px;font-size:12.4px;color:#444;letter-spacing:0.185px;transform:scaleX(0.885);transform-origin:0 0;">Note</span>
<span class="t" style="left:1041.56px;top:295.00px;font-size:12.4px;color:#444;letter-spacing:-0.086px;transform:scaleX(0.885);transform-origin:0 0;">D ear Mr.</span>
<div class="r" style="left:545px;top:306.9px;width:23px;height:13px;background:#ffff00;"></div>
<div class="r" style="left:1044px;top:306.9px;width:23px;height:13px;background:#ffff00;"></div>
<span class="t" style="left:413.04px;top:308.00px;font-size:12.4px;color:#444;letter-spacing:0.260px;transform:scaleX(0.885);transform-origin:0 0;">Jackson,</span>
<span class="t" style="left:477.65px;top:308.00px;font-size:12.4px;color:#444;letter-spacing:-0.291px;transform:scaleX(0.885);transform-origin:0 0;">I´m afraid that</span>
<span class="t" style="left:545.80px;top:308.00px;font-size:12.4px;color:#444;letter-spacing:-0.564px;transform:scaleX(0.885);transform-origin:0 0;">price</span>
<span class="t" style="left:571.70px;top:308.00px;font-size:12.4px;color:#444;letter-spacing:-0.211px;transform:scaleX(0.885);transform-origin:0 0;">is simply too high. My associates and I have agreed to purchase the CH-500 model instead, since its</span>
<span class="t" style="left:1044.42px;top:308.00px;font-size:12.4px;color:#444;letter-spacing:-0.594px;transform:scaleX(0.885);transform-origin:0 0;">price</span>
<span class="t" style="left:1069.96px;top:308.00px;font-size:12.4px;color:#444;letter-spacing:-0.255px;transform:scaleX(0.885);transform-origin:0 0;">is within our</span>
<span class="t" style="left:413.15px;top:321.00px;font-size:12.4px;color:#444;letter-spacing:0.046px;transform:scaleX(0.885);transform-origin:0 0;">budget.</span>
<span class="t" style="left:470.36px;top:321.00px;font-size:12.4px;color:#444;transform:scaleX(0.885);transform-origin:0 0;">Regards,</span>
<span class="t" style="left:535.16px;top:321.00px;font-size:12.4px;color:#444;letter-spacing:-0.112px;transform:scaleX(0.885);transform-origin:0 0;">Roger Macintosh</span>
<span class="t" style="left:658.06px;top:321.00px;font-size:12.4px;color:#444;letter-spacing:-0.133px;transform:scaleX(0.885);transform-origin:0 0;">Recipient:</span>
<span class="t" style="left:713.29px;top:321.00px;font-size:12.4px;color:#444;letter-spacing:-0.133px;transform:scaleX(0.885);transform-origin:0 0;">"andrew.jackson@moyaware.com</span>
<div class="r" style="left:311px;top:427px;width:818px;height:16px;background:#efefef;"></div>
<div class="r" style="left:329px;top:427px;width:777px;height:15px;border:1px solid #959595;border-radius:2.5px;background:linear-gradient(#f4f4f4 0%,#e9e9ea 45%,#d6d6d9 55%,#c6c6ca 100%);box-shadow:inset 0 0 0 1px rgba(255,255,255,.55);"></div>
<svg class="i" width="1135" height="714" viewBox="0 0 1135 714"><path d="M321 431 V438 L317 434.5 Z M1119 431 V438 L1123 434.5 Z" fill="#333"/><path d="M712.5 430.5 h8 v8 h-8 z" fill="rgba(255,255,255,.35)"/><path d="M713.5 431 v7 m3 -7 v7 m3 -7 v7" stroke="#555" stroke-width="1.1"/></svg>
<div class="r" style="left:311px;top:443px;width:818px;height:6px;background:#cbcbcb;"></div>
<span class="t" style="left:314.88px;top:458.00px;font-size:18px;color:#505050;letter-spacing:0.058px;">Case History</span>
<svg class="i" width="1135" height="714" viewBox="0 0 1135 714"><path d="M1075.8 464.8 H1084.8 L1080.3 469.8 Z" fill="#666"/><path d="M1097.5 462.3 H1101.5 V467.8 H1097.5 Z M1096.0 467.8 H1103.0 M1099.5 467.8 V471.8" fill="none" stroke="#555" stroke-width="1"/><path d="M1100.7 462.3 V467.8" stroke="#555" stroke-width="1.4"/><path d="M1114.3 463.3 L1121.3 470.3 M1121.3 463.3 L1114.3 470.3" stroke="#555" stroke-width="1.2"/></svg>
<div class="r" style="left:311px;top:484px;width:818px;height:164px;background:#fff;"></div>
<div class="r" style="left:311px;top:484px;width:818px;height:22px;border-bottom:1px solid #d8d8d8;background:linear-gradient(#fff 0%,#fff 35%,#f1f1f1 45%,#f4f4f4 100%);"></div>
<div class="r" style="left:460px;top:485px;width:1px;height:20px;background:#dcdcdc;"></div>
<div class="r" style="left:611px;top:485px;width:1px;height:20px;background:#dcdcdc;"></div>
<span class="t" style="left:315.35px;top:491.00px;font-size:11.5px;color:#1a1a1a;letter-spacing:0.169px;">Date</span>
<span class="t" style="left:465.50px;top:491.00px;font-size:11.5px;color:#1a1a1a;letter-spacing:-0.181px;">User</span>
<span class="t" style="left:615.50px;top:491.00px;font-size:11.5px;color:#1a1a1a;letter-spacing:0.514px;">Information</span>
<div class="r" style="left:331px;top:509px;width:798px;height:18px;background:#f0f0f0;"></div>
<span class="t" style="left:333.60px;top:513.00px;font-size:11.5px;color:#1a1a1a;letter-spacing:0.037px;">4/18/2014 11:06:46 AM</span>
<span class="t" style="left:466.07px;top:513.00px;font-size:11.5px;color:#1a1a1a;letter-spacing:0.384px;">MOYAWARE\Administr...</span>
<span class="t" style="left:616.60px;top:513.00px;font-size:11.5px;color:#1a1a1a;letter-spacing:0.073px;">Document added: Project_Emails - Harry Evans, 4/25/2014</span>
<span class="t" style="left:333.60px;top:532.00px;font-size:11.5px;color:#1a1a1a;letter-spacing:0.037px;">4/18/2014 11:06:34 AM</span>
<span class="t" style="left:466.07px;top:532.00px;font-size:11.5px;color:#1a1a1a;letter-spacing:0.384px;">MOYAWARE\Administr...</span>
<span class="t" style="left:616.60px;top:532.00px;font-size:11.5px;color:#1a1a1a;letter-spacing:0.137px;">Document added: Project_Emails - Roger Macintosh, 4/25/2014</span>
<span class="t" style="left:333.60px;top:551.00px;font-size:11.5px;color:#1a1a1a;letter-spacing:-0.008px;">4/18/2014 10:51:20 AM</span>
<span class="t" style="left:466.07px;top:551.00px;font-size:11.5px;color:#1a1a1a;letter-spacing:0.384px;">MOYAWARE\Administr...</span>
<span class="t" style="left:616.60px;top:551.00px;font-size:11.5px;color:#1a1a1a;letter-spacing:0.045px;">Document added: Project_Contracts - 8521471, 5/28/2014, 0, 0</span>
<span class="t" style="left:333.60px;top:570.00px;font-size:11.5px;color:#1a1a1a;letter-spacing:-0.008px;">4/18/2014 10:47:57 AM</span>
<span class="t" style="left:466.07px;top:570.00px;font-size:11.5px;color:#1a1a1a;letter-spacing:0.384px;">MOYAWARE\Administr...</span>
<span class="t" style="left:616.60px;top:570.00px;font-size:11.5px;color:#1a1a1a;letter-spacing:0.223px;">Document added: Project Reports - Whitewall Construction Project.docx</span>
<span class="t" style="left:333.60px;top:589.00px;font-size:11.5px;color:#1a1a1a;letter-spacing:-0.008px;">4/18/2014 10:43:36 AM</span>
<span class="t" style="left:466.07px;top:589.00px;font-size:11.5px;color:#1a1a1a;letter-spacing:0.384px;">MOYAWARE\Administr...</span>
<span class="t" style="left:616.99px;top:589.00px;font-size:11.5px;color:#1a1a1a;letter-spacing:-0.166px;">Case created</span>
<div class="r" style="left:311px;top:648px;width:818px;height:16px;background:#efefef;"></div>
<div class="r" style="left:329px;top:648px;width:620px;height:15px;border:1px solid #959595;border-radius:2.5px;background:linear-gradient(#f4f4f4 0%,#e9e9ea 45%,#d6d6d9 55%,#c6c6ca 100%);box-shadow:inset 0 0 0 1px rgba(255,255,255,.55);"></div>
<svg class="i" width="1135" height="714" viewBox="0 0 1135 714"><path d="M321 652 V659 L317 655.5 Z M1119 652 V659 L1123 655.5 Z" fill="#333"/><path d="M634.0 651.5 h8 v8 h-8 z" fill="rgba(255,255,255,.35)"/><path d="M635.0 652 v7 m3 -7 v7 m3 -7 v7" stroke="#555" stroke-width="1.1"/></svg>
<div class="r" style="left:311px;top:664px;width:818px;height:1px;background:#c8c8c8;"></div>
<div class="r" style="left:442px;top:664px;width:75px;height:22px;background:#fff;border:1px solid #b8b8b8;border-top:1px solid #fff;"></div>
<span class="t" style="left:316.94px;top:670.00px;font-size:11.5px;color:#444;letter-spacing:0.304px;">Additional Information</span>
<span class="t" style="left:448.38px;top:669.00px;font-size:11.5px;color:#333;letter-spacing:-0.358px;">Case History</span>
<span class="t" style="left:523.35px;top:670.00px;font-size:11.5px;color:#444;letter-spacing:0.034px;">Linked Objects</span>
</body></html>
